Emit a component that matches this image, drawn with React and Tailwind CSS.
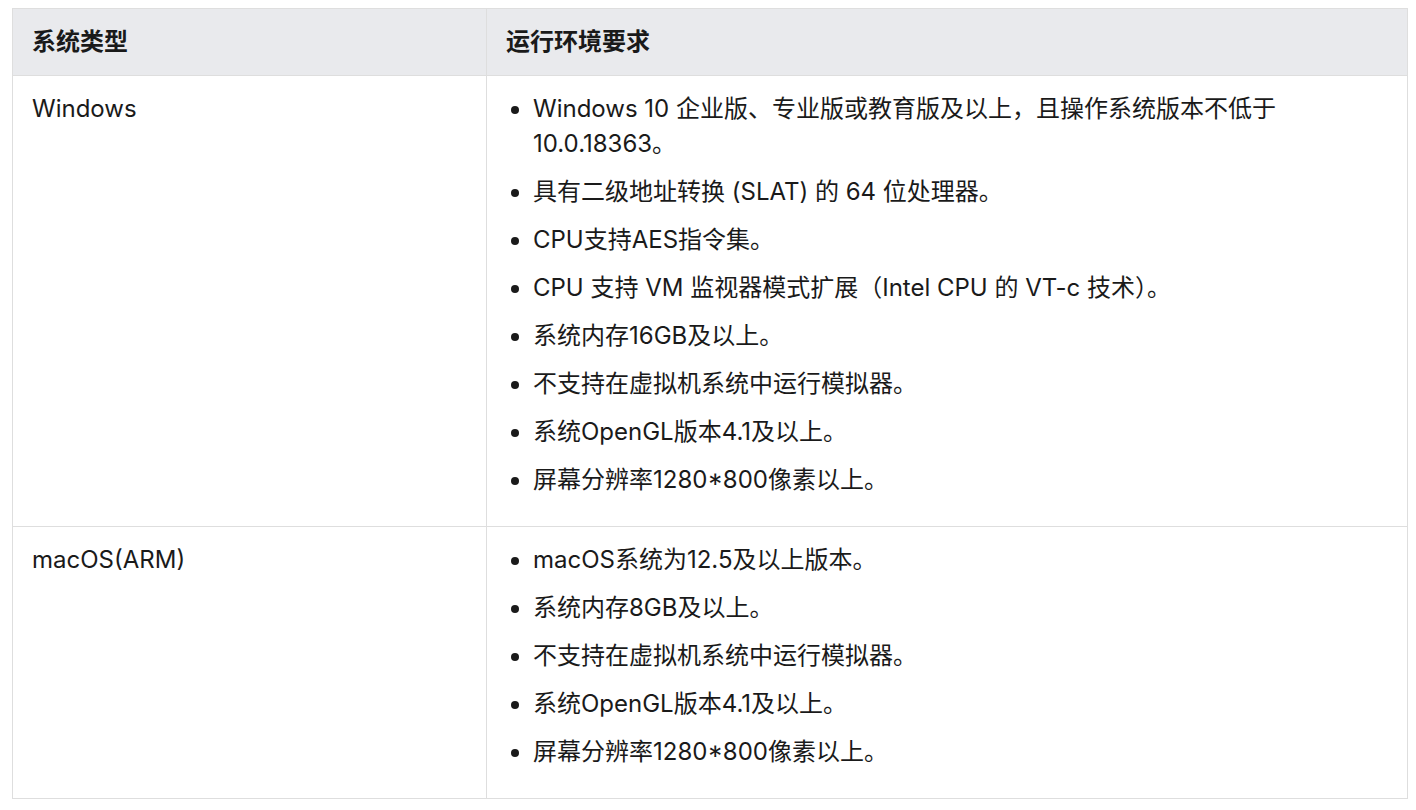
import React from "react";

const rows = [
  {
    type: "Windows",
    items: [
      "Windows 10 企业版、专业版或教育版及以上，且操作系统版本不低于 10.0.18363。",
      "具有二级地址转换 (SLAT) 的 64 位处理器。",
      "CPU支持AES指令集。",
      "CPU 支持 VM 监视器模式扩展（Intel CPU 的 VT-c 技术）。",
      "系统内存16GB及以上。",
      "不支持在虚拟机系统中运行模拟器。",
      "系统OpenGL版本4.1及以上。",
      "屏幕分辨率1280*800像素以上。",
    ],
  },
  {
    type: "macOS(ARM)",
    items: [
      "macOS系统为12.5及以上版本。",
      "系统内存8GB及以上。",
      "不支持在虚拟机系统中运行模拟器。",
      "系统OpenGL版本4.1及以上。",
      "屏幕分辨率1280*800像素以上。",
    ],
  },
];

export default function App() {
  return (
    <div
      className="min-h-[810px] w-[1416px] bg-white pl-3 pt-2 text-[24px] text-[#1a1a1a]"
      style={{ fontFamily: '"Inter", "Noto Sans CJK SC", sans-serif' }}
    >
      <table className="w-[1396px] table-fixed border-collapse border border-[#dedede]">
        <colgroup>
          <col className="w-[474px]" />
          <col />
        </colgroup>
        <thead>
          <tr className="h-[67px] bg-[#e9eaed]">
            <th className="border border-[#dedede] px-[19px] text-left align-middle font-bold">
              系统类型
            </th>
            <th className="border border-[#dedede] px-[19px] text-left align-middle font-bold">
              运行环境要求
            </th>
          </tr>
        </thead>
        <tbody>
          {rows.map((r) => (
            <tr key={r.type}>
              <td className="border border-[#dedede] px-[19px] pt-[15px] pb-4 align-top leading-[35px]">
                {r.type}
              </td>
              <td className="border border-[#dedede] px-[19px] pt-[15px] pb-4 align-top">
                <ul className="list-disc pl-[27px] leading-[35px]">
                  {r.items.map((it) => (
                    <li key={it} className="mb-[13px]">
                      {it}
                    </li>
                  ))}
                </ul>
              </td>
            </tr>
          ))}
        </tbody>
      </table>
    </div>
  );
}
